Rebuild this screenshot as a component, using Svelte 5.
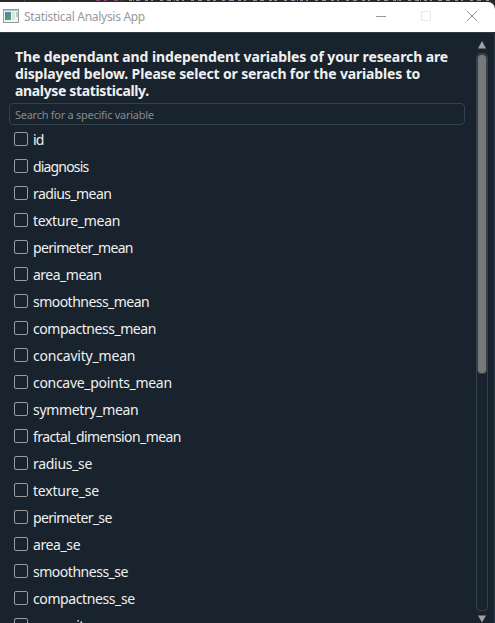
<script>
  // label and its tracking in px
  const variables = [
    ['id', -0.8], ['diagnosis', -0.84], ['radius_mean', -0.58], ['texture_mean', -0.32],
    ['perimeter_mean', -0.68], ['area_mean', -0.5], ['smoothness_mean', -0.53],
    ['compactness_mean', -0.46], ['concavity_mean', -0.2], ['concave_points_mean', -0.3],
    ['symmetry_mean', -0.33], ['fractal_dimension_mean', -0.58], ['radius_se', -0.3],
    ['texture_se', -0.2], ['perimeter_se', -0.65], ['area_se', -0.4],
    ['smoothness_se', -0.48], ['compactness_se', -0.4], ['concavity_se', -0.4]
  ];
</script>

<div class="screen">
  <div class="backdrop">
    <svg width="495" height="2" viewBox="0 0 495 2">
      <path d="M24.5 0v2M60.5 0v2" stroke="#4a4748" />
      <path d="M96 .5h4M104 .5h3M114 .5h4M121 .5h1" stroke="#8c3f78" />
      <path d="M129 .5H490" stroke="#8696a6" stroke-dasharray="3 4 4 5 3 3 2 7" />
      <path d="M133 .5H490" stroke="#a08568" stroke-dasharray="1 17 1 22" />
    </svg>
  </div>
  <header>
    <svg class="logo" width="16" height="14" viewBox="0 0 16 14">
      <defs>
        <linearGradient id="tile" x1="0" y1="0" x2="1" y2="1">
          <stop offset="0" stop-color="#4b83a5" /><stop offset="1" stop-color="#51a571" />
        </linearGradient>
      </defs>
      <rect x=".5" y=".5" width="15" height="13" fill="#f1f2f2" stroke="#979b9f" />
      <path d="M1 1.5h14" stroke="#b9c0c7" />
      <rect x="2" y="3" width="6" height="8" fill="url(#tile)" />
      <rect x="9" y="3" width="3" height="8" fill="#dce3e4" />
      <rect x="13" y="3" width="2" height="5" fill="#b4d0c9" />
    </svg>
    <span class="title">Statistical Analysis App</span>
    <svg class="controls" width="120" height="30" viewBox="0 0 120 30" fill="none">
      <path d="M1 14.5h10" stroke="#999" />
      <rect x="46.5" y="9.5" width="9" height="9" stroke="#e6e6e6" />
      <path d="M92 9l10 10M102 9l-10 10" stroke="#929292" />
    </svg>
  </header>
  <main>
    <section>
      <h1>
        <span class="l1">The dependant and independent variables of your research are</span>
        <span class="l2">displayed below. Please select or serach for the variables to</span>
        <span class="l3">analyse statistically.</span>
      </h1>
      <div class="search"><span>Search for a specific variable</span></div>
      <ul>
        {#each variables as [name, tracking]}
          <li><i class="box"></i><span style="letter-spacing: {tracking}px">{name}</span></li>
        {/each}
      </ul>
    </section>
    <aside>
      <svg width="10" height="8" viewBox="0 0 10 8"><path d="M5 0L9 7.5H1z" fill="#a1a1a1" /></svg>
      <div class="track"><div class="thumb"></div></div>
      <svg width="10" height="8" viewBox="0 0 10 8"><path d="M1 .5h8L5 7.5z" fill="#a1a1a1" /></svg>
    </aside>
  </main>
</div>

<style>
  :global(body) { margin: 0; overflow: hidden; }
  .screen {
    width: 495px; height: 623px; overflow: hidden; display: flex; flex-direction: column;
    background: #19232d; font-family: "Noto Sans", "Open Sans", sans-serif; color: #f0f0f0;
  }
  .backdrop { height: 10px; margin-bottom: -8px; flex: none; background: #2b2829; }
  .backdrop svg { display: block; }
  header {
    height: 30px; flex: none; display: flex; align-items: center; background: #fff;
    border-radius: 0 7px 0 0; padding-left: 3px; box-sizing: border-box;
  }
  .logo { margin-top: -3px; }
  .title { margin-left: 5px; font-size: 12px; letter-spacing: -0.3px; color: #999; white-space: nowrap; line-height: 30px; height: 30px; }
  .controls { margin-left: auto; flex: none; }
  main {
    height: 591px; box-sizing: border-box; display: flex; justify-content: space-between;
    border-top: 1px solid #2c3b45; border-right: 1px solid #2c3b45;
    border-top-right-radius: 4px; overflow: hidden;
  }
  section { width: 456px; padding: 15px 0 0 9px; }
  h1 { margin: 0 0 4px 6px; font-size: 14px; line-height: 17px; font-weight: 700; }
  h1 span { display: block; white-space: nowrap; }
  .l1 { letter-spacing: -0.1px; }
  .l2 { letter-spacing: -0.15px; }
  .l3 { letter-spacing: -0.35px; }
  .search {
    height: 22px; box-sizing: border-box; border: 1px solid #32414b; border-radius: 4px;
    padding-left: 5px; font-size: 11px; line-height: 21px; color: #858b90; letter-spacing: -0.27px;
  }
  ul { list-style: none; margin: 1px 0 0; padding: 0; }
  li { height: 27px; display: flex; align-items: center; padding-left: 5px; font-size: 14px; line-height: 27px; }
  .box { width: 14px; height: 14px; box-sizing: border-box; border: 1px solid #9b9b9b; border-radius: 2px; margin: -1px 5px 0 0; }
  li span { white-space: nowrap; }
  aside { width: 12px; height: 590px; margin-right: 6px; display: flex; flex-direction: column; align-items: center; }
  aside svg { flex: none; margin-top: 8px; }
  .track { width: 12px; height: 558px; box-sizing: border-box; border: 1px solid #32414b; border-radius: 4px; margin-top: 4px; flex: none; }
  .thumb { height: 320px; background: #787878; border: 1px solid #32414b; border-radius: 4px; box-sizing: border-box; }
  .track + svg { margin-top: 4px; }
</style>
